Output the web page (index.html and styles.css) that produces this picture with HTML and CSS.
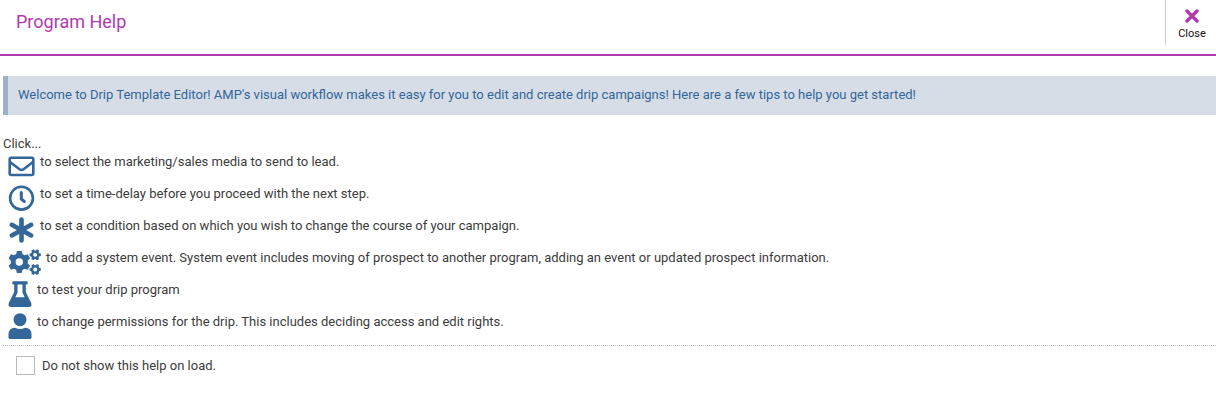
FILE: index.html
```html
<!DOCTYPE html>
<html lang="en">
<head>
<meta charset="utf-8">
<title>Program Help</title>
<link rel="stylesheet" href="styles.css">
</head>
<body>
<header class="header">
  <h1 class="title">Program Help</h1>
  <button class="close" type="button">
    <svg class="close-icon" width="14" height="14" viewBox="0 0 14 14" aria-hidden="true"><path d="M2 2l10 10M12 2l-10 10"/></svg>
    Close
  </button>
</header>
<main class="content">
  <p class="welcome">Welcome to Drip Template Editor! AMP's visual workflow makes it easy for you to edit and create drip campaigns! Here are a few tips to help you get started!</p>
  <p class="intro">Click...</p>
  <ul class="tips">
    <li class="tip">
      <svg class="icon" width="27" height="26" viewBox="0 0 27 26" aria-hidden="true"><g class="line"><rect x="1.7" y="4.7" width="23.6" height="17.3" rx="1.5"/><path d="M2 9l9.5 7.2q2 1.4 4 0L25 9"/></g></svg>
      <span>to select the marketing/sales media to send to lead.</span>
    </li>
    <li class="tip">
      <svg class="icon" width="27" height="26" viewBox="0 0 27 26" aria-hidden="true"><g class="line"><circle cx="13.5" cy="13.2" r="11.4"/><path class="hands" d="M13.3 7.500v6.500l3 2.500"/></g></svg>
      <span>to set a time-delay before you proceed with the next step.</span>
    </li>
    <li class="tip">
      <svg class="icon" width="27" height="26" viewBox="0 0 27 26" aria-hidden="true"><path class="star" d="M13.5 2.500v21M3.800 7.800l19.400 10.600M3.800 18.400L23.200 7.800"/></svg>
      <span>to set a condition based on which you wish to change the course of your campaign.</span>
    </li>
    <li class="tip">
      <svg class="icon" width="33" height="26" viewBox="0 0 33 26" aria-hidden="true">
        <defs>
          <path id="gear" fill-rule="evenodd" d="M-2.400-10.900H2.400L3.100-8 5.300-6.800 8.300-7.700 10.700-3.700 8.500-1.400V1.400L10.700 3.700 8.300 7.700 5.300 6.800 3.100 8 2.400 10.900H-2.400L-3.100 8-5.300 6.800-8.300 7.700-10.700 3.700-8.500 1.400V-1.400L-10.700-3.700-8.300-7.700-5.300-6.800-3.100-8ZM0-3.700A3.700 3.700 0 1 0 0 3.700 3.700 3.700 0 1 0 0-3.700Z"/>
        </defs>
        <use class="gear" href="#gear" transform="translate(11.3 13)"/>
        <use class="gear" href="#gear" transform="translate(27.2 5.8) rotate(30) scale(.51)"/>
        <use class="gear" href="#gear" transform="translate(27.2 20.5) rotate(30) scale(.51)"/>
      </svg>
      <span>to add a system event. System event includes moving of prospect to another program, adding an event or updated prospect information.</span>
    </li>
    <li class="tip">
      <svg class="icon" width="24" height="26" viewBox="0 0 24 26" aria-hidden="true"><path fill-rule="evenodd" d="M5.3.3H18.700a1 1 0 0 1 1 1V2.500a1 1 0 0 1-1 1H17.800V11L23.100 21.700Q24.500 26 20.500 26H3.500Q-.5 26 .9 21.700L6.200 11V3.500H5.300a1 1 0 0 1-1-1V1.300a1 1 0 0 1 1-1ZM9.500 3.500V11.800L7.300 16.300H16.700L14.500 11.800V3.500Z"/></svg>
      <span>to test your drip program</span>
    </li>
    <li class="tip">
      <svg class="icon" width="24" height="26" viewBox="0 0 24 26" aria-hidden="true"><circle cx="12" cy="6.700" r="6.500"/><path d="M.5 26V21.500Q.5 15 7 14.700 12 17.300 17 14.700 23.500 15 23.500 21.500V24.500Q23.500 26 22 26H2Q.5 26 .5 24.500Z"/></svg>
      <span>to change permissions for the drip. This includes deciding access and edit rights.</span>
    </li>
  </ul>
  <label class="option"><input class="check" type="checkbox">Do not show this help on load.</label>
</main>
</body>
</html>
```
FILE: styles.css
```css
* {
  box-sizing: border-box;
}

body {
  margin: 0;
  background: #fff;
  color: #3c3c3c;
  font: 13px/18px Roboto, "Liberation Sans", sans-serif;
}

.header {
  display: flex;
  justify-content: space-between;
  align-items: flex-start;
  height: 56px;
  padding-left: 16px;
  border-bottom: 2px solid #b23aae;
}

.title {
  margin: 0;
  padding-top: 10px;
  color: #b23aae;
  font-size: 18px;
  font-weight: 400;
  line-height: 24px;
}

.close {
  display: flex;
  flex-direction: column;
  align-items: center;
  width: 51px;
  height: 45px;
  padding: 9px 0 0 2px;
  border: 0;
  border-left: 1px solid #ccc;
  background: none;
  color: #111;
  font: 11px/14px Roboto, "Liberation Sans", sans-serif;
  gap: 4px;
  cursor: pointer;
}

.close-icon {
  fill: none;
  stroke: #b23aae;
  stroke-width: 3.4;
  stroke-linecap: round;
}

.content {
  padding: 20px 0 0 3px;
}

.welcome {
  margin: 0 0 20px;
  padding: 10px 10px 11px;
  border-left: 5px solid #9bb2c6;
  background: #d6dde6;
  color: #336699;
}

.intro {
  margin: 0;
}

.tips {
  margin: 0;
  padding: 0 0 0 5px;
  list-style: none;
}

.tip {
  display: flex;
  gap: 5px;
  height: 32px;
}

.icon {
  flex: none;
  fill: #336699;
}

.line {
  fill: none;
  stroke: #336699;
  stroke-width: 2.6;
}

.hands {
  stroke-width: 3;
  stroke-linecap: round;
  stroke-linejoin: round;
}

.star {
  stroke: #336699;
  stroke-width: 4.6;
  stroke-linecap: round;
}

.option {
  display: flex;
  align-items: center;
  gap: 7px;
  padding: 10px 0 0 13px;
  border-top: 1px dotted #bbb;
}

.check {
  appearance: none;
  width: 19px;
  height: 19px;
  margin: 0;
  border: 1px solid #bbb;
  background: #fff;
}

.check:checked {
  background: #336699;
}
```
